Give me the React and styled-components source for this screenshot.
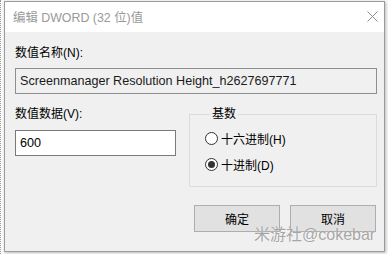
import React from 'react'
import styled, { createGlobalStyle } from 'styled-components'

const GlobalStyle = createGlobalStyle`
    html, body {
        margin: 0;
        padding: 0;
        background: #ffffff;
    }
    body {
        font-family: "Liberation Sans", "Noto Sans CJK SC", sans-serif;
        font-size: 12px;
        color: #000;
    }
`;

const App = () => {
    return (
        <Page>
            <GlobalStyle />
            <Window>
                <TitleBar>
                    <Title>编辑 DWORD (32 位)值</Title>
                    <CloseIcon viewBox="0 0 11 11">
                        <path d="M0.5 0.5 L10.5 10.5 M10.5 0.5 L0.5 10.5" stroke="#8c8c8c" strokeWidth="1" />
                    </CloseIcon>
                </TitleBar>

                <Body>
                    <Label>数值名称(N):</Label>
                    <NameField>Screenmanager Resolution Height_h2627697771</NameField>

                    <DataRow>
                        <DataColumn>
                            <Label>数值数据(V):</Label>
                            <ValueField>600</ValueField>
                        </DataColumn>

                        <BaseGroup>
                            <Legend>基数</Legend>
                            <RadioRow>
                                <RadioCircle />
                                <span>十六进制(H)</span>
                            </RadioRow>
                            <RadioRow>
                                <RadioCircle $checked />
                                <span>十进制(D)</span>
                            </RadioRow>
                        </BaseGroup>
                    </DataRow>

                    <ButtonRow>
                        <Button>确定</Button>
                        <Button>取消</Button>
                    </ButtonRow>
                </Body>

                <Watermark>米游社@cokebar</Watermark>
            </Window>
        </Page>
    )
}

const Page = styled.div`
    width: 388px;
    height: 254px;
    box-sizing: border-box;
    padding: 1px 0 0 3px;
    overflow: hidden;
    background: #fafafa;
    border-left: 1px dotted #9a9a9a;
`;

const Window = styled.div`
    position: relative;
    width: 381px;
    height: 251px;
    box-sizing: border-box;
    border: 1px solid #9b9b9b;
    background: #f0f0f0;
    display: flex;
    flex-direction: column;
    box-shadow: 1px 1px 3px rgba(0, 0, 0, 0.25);
`;

const TitleBar = styled.div`
    height: 30px;
    flex-shrink: 0;
    background: #ffffff;
    display: flex;
    align-items: center;
    justify-content: space-between;
    padding: 0 6px 0 8px;
`;

const Title = styled.span`
    color: #999999;
    font-size: 12.4px;
`;

const CloseIcon = styled.svg`
    width: 11px;
    height: 11px;
    margin-top: -2px;
`;

const Body = styled.div`
    flex: 1;
    display: flex;
    flex-direction: column;
    padding: 13px 7px 0 10px;
`;

const Label = styled.div`
    line-height: 16px;
    height: 16px;
`;

const NameField = styled.div`
    margin-top: 7px;
    height: 26px;
    box-sizing: border-box;
    border: 1px solid #8e8e8e;
    background: #f0f0f0;
    padding: 0 4px;
    display: flex;
    align-items: center;
    color: #1a1a1a;
    font-size: 12.6px;
`;

const DataRow = styled.div`
    margin-top: 12px;
    display: flex;
    align-items: flex-start;
`;

const DataColumn = styled.div`
    width: 161px;
    display: flex;
    flex-direction: column;
`;

const ValueField = styled.div`
    margin-top: 8px;
    height: 26px;
    box-sizing: border-box;
    border: 1px solid #7a7a7a;
    background: #ffffff;
    padding: 0 4px;
    display: flex;
    align-items: center;
    font-size: 12.6px;
`;

const BaseGroup = styled.fieldset`
    margin: 0 0 0 13px;
    width: 188px;
    height: 81px;
    box-sizing: border-box;
    border: 1px solid #dcdcdc;
    padding: 8px 0 0 15px;
    display: flex;
    flex-direction: column;
    gap: 9px;
`;

const Legend = styled.legend`
    margin-left: 5px;
    padding: 0 2px;
    line-height: 16px;
`;

const RadioRow = styled.div`
    display: flex;
    align-items: center;
    gap: 3px;
    height: 17px;
`;

const RadioCircle = styled.span`
    width: 13px;
    height: 13px;
    box-sizing: border-box;
    border-radius: 50%;
    border: 1px solid #333333;
    background: #ffffff;
    display: flex;
    align-items: center;
    justify-content: center;

    &::after {
        content: '';
        width: 7px;
        height: 7px;
        border-radius: 50%;
        background: ${(p) => (p.$checked ? '#333333' : 'transparent')};
    }
`;

const ButtonRow = styled.div`
    margin-top: 18px;
    padding-right: 1px;
    display: flex;
    justify-content: flex-end;
    gap: 10px;
`;

const Button = styled.div`
    width: 86px;
    height: 27px;
    box-sizing: border-box;
    border: 1px solid #adadad;
    background: #e1e1e1;
    display: flex;
    align-items: center;
    justify-content: center;
`;

const Watermark = styled.div`
    position: absolute;
    left: 249px;
    top: 219px;
    font-size: 16px;
    color: rgba(150, 150, 150, 0.85);
    text-shadow: 0 0 1px rgba(255, 255, 255, 0.8);
    white-space: nowrap;
`;

export default App
